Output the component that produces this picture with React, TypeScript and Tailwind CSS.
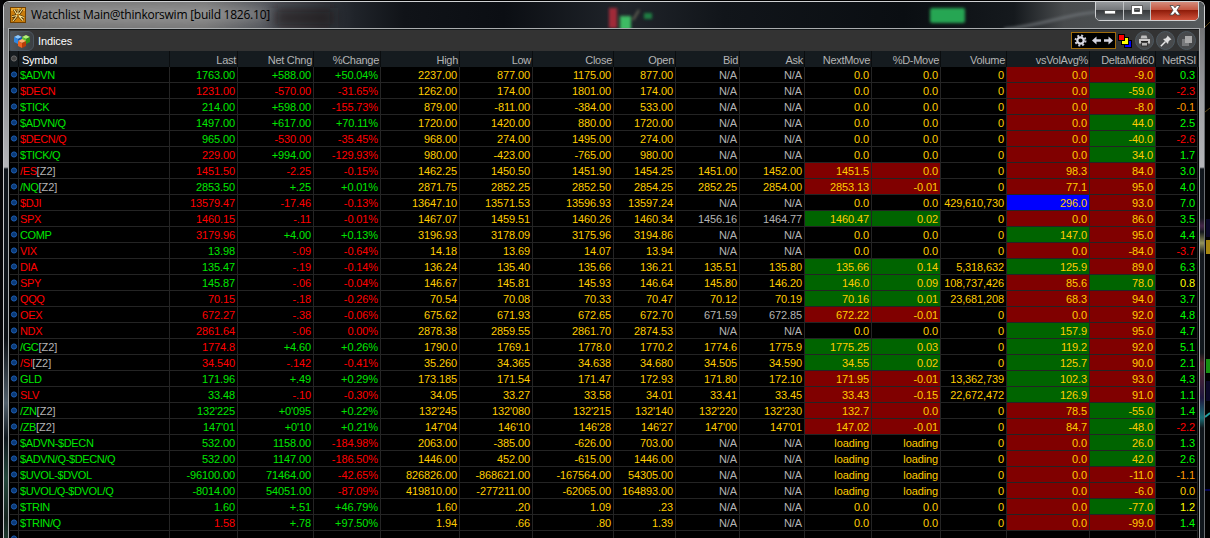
import React from "react";

const GRID =
  "grid grid-cols-[9px_151px_68px_76px_67px_79px_73px_81px_62px_64px_65px_67px_69px_66px_83px_66px_42px]";

const headers = [
  "Last", "Net Chng", "%Change", "High", "Low", "Close", "Open", "Bid", "Ask",
  "NextMove", "%D-Move", "Volume", "vsVolAvg%", "DeltaMid60", "NetRSI",
];

const textColor: Record<string, string> = {
  g: "text-[#00e600]",
  r: "text-[#ff0000]",
  y: "text-[#ffcc00]",
  w: "text-[#b4b4b4]",
  G: "text-[#00ff00]",
  Y: "text-[#ffff00]",
  o: "text-[#ff9900]",
};

const fill: Record<string, string> = {
  r: "bg-[#800000]",
  g: "bg-[#006400]",
  b: "bg-[#0000ff]",
  k: "",
};

// symbol | text colours of symbol, last, net, %chg, bid/ask, rsi | fills of next, d-move, vsvol, delta | values
const rows: string[] = [
  "$ADVN|ggggwG|kkrr|1763.00 +588.00 +50.04% 2237.00 877.00 1175.00 877.00 N/A N/A 0.0 0.0 0 0.0 -9.0 0.3",
  "$DECN|rrrrwr|kkrg|1231.00 -570.00 -31.65% 1262.00 174.00 1801.00 174.00 N/A N/A 0.0 0.0 0 0.0 -59.0 -2.3",
  "$TICK|gggrwo|kkrr|214.00 +598.00 -155.73% 879.00 -811.00 -384.00 533.00 N/A N/A 0.0 0.0 0 0.0 -8.0 -0.1",
  "$ADVN/Q|ggggwG|kkrg|1497.00 +617.00 +70.11% 1720.00 1420.00 880.00 1720.00 N/A N/A 0.0 0.0 0 0.0 44.0 2.5",
  "$DECN/Q|rgrrwr|kkrg|965.00 -530.00 -35.45% 968.00 274.00 1495.00 274.00 N/A N/A 0.0 0.0 0 0.0 -40.0 -2.6",
  "$TICK/Q|grgrwG|kkrg|229.00 +994.00 -129.93% 980.00 -423.00 -765.00 980.00 N/A N/A 0.0 0.0 0 0.0 34.0 1.7",
  "/ES[Z2]|rrrryG|rrrr|1451.50 -2.25 -0.15% 1462.25 1450.50 1451.90 1454.25 1451.00 1452.00 1451.5 0.0 0 98.3 84.0 3.0",
  "/NQ[Z2]|ggggyG|rrrr|2853.50 +.25 +0.01% 2871.75 2852.25 2852.50 2854.25 2852.25 2854.00 2853.13 -0.01 0 77.1 95.0 4.0",
  "$DJI|rrrrwG|kkbr|13579.47 -17.46 -0.13% 13647.10 13571.53 13596.93 13597.24 N/A N/A 0.0 0.0 429,610,730 296.0 93.0 7.0",
  "SPX|rrrrwG|ggrr|1460.15 -.11 -0.01% 1467.07 1459.51 1460.26 1460.34 1456.16 1464.77 1460.47 0.02 0 0.0 86.0 3.5",
  "COMP|grggwG|kkgr|3179.96 +4.00 +0.13% 3196.93 3178.09 3175.96 3194.86 N/A N/A 0.0 0.0 0 147.0 95.0 4.4",
  "VIX|rgrrwr|kkrr|13.98 -.09 -0.64% 14.18 13.69 14.07 13.94 N/A N/A 0.0 0.0 0 0.0 -84.0 -3.7",
  "DIA|rgrryG|gggr|135.47 -.19 -0.14% 136.24 135.40 135.66 136.21 135.51 135.80 135.66 0.14 5,318,632 125.9 89.0 6.3",
  "SPY|rgrryY|ggrg|145.87 -.06 -0.04% 146.67 145.81 145.93 146.64 145.80 146.20 146.0 0.09 108,737,426 85.6 78.0 0.8",
  "QQQ|rrrryG|ggrr|70.15 -.18 -0.26% 70.54 70.08 70.33 70.47 70.12 70.19 70.16 0.01 23,681,208 68.3 94.0 3.7",
  "OEX|rrrrwG|rrrr|672.27 -.38 -0.06% 675.62 671.93 672.65 672.70 671.59 672.85 672.22 -0.01 0 0.0 92.0 4.8",
  "NDX|rrrrwG|kkgr|2861.64 -.06 0.00% 2878.38 2859.55 2861.70 2874.53 N/A N/A 0.0 0.0 0 157.9 95.0 4.7",
  "/GC[Z2]|grggyG|gggr|1774.8 +4.60 +0.26% 1790.0 1769.1 1778.0 1770.2 1774.6 1775.9 1775.25 0.03 0 119.2 92.0 5.1",
  "/SI[Z2]|rrrryG|gggr|34.540 -.142 -0.41% 35.260 34.365 34.638 34.680 34.505 34.590 34.55 0.02 0 125.7 90.0 2.1",
  "GLD|ggggyG|rrgr|171.96 +.49 +0.29% 173.185 171.54 171.47 172.93 171.80 172.10 171.95 -0.01 13,362,739 102.3 93.0 4.3",
  "SLV|rgrryG|rrgr|33.48 -.10 -0.30% 34.05 33.27 33.58 34.01 33.41 33.45 33.43 -0.15 22,672,472 126.9 91.0 1.1",
  "/ZN[Z2]|ggggyG|rrrg|132'225 +0'095 +0.22% 132'245 132'080 132'215 132'140 132'220 132'230 132.7 0.0 0 78.5 -55.0 1.4",
  "/ZB[Z2]|ggggyr|rrrg|147'01 +0'10 +0.21% 147'04 146'10 146'28 146'27 147'00 147'01 147.02 -0.01 0 84.7 -48.0 -2.2",
  "$ADVN-$DECN|gggrwG|kkrg|532.00 1158.00 -184.98% 2063.00 -385.00 -626.00 703.00 N/A N/A loading loading 0 0.0 26.0 1.3",
  "$ADVN/Q-$DECN/Q|gggrwG|kkrg|532.00 1147.00 -186.50% 1446.00 452.00 -615.00 1446.00 N/A N/A loading loading 0 0.0 42.0 2.6",
  "$UVOL-$DVOL|gggrwo|kkrr|-96100.00 71464.00 -42.65% 826826.00 -868621.00 -167564.00 54305.00 N/A N/A loading loading 0 0.0 -11.0 -1.1",
  "$UVOL/Q-$DVOL/Q|gggrwy|kkrr|-8014.00 54051.00 -87.09% 419810.00 -277211.00 -62065.00 164893.00 N/A N/A loading loading 0 0.0 -6.0 0.0",
  "$TRIN|ggggwY|kkrg|1.60 +.51 +46.79% 1.60 .20 1.09 .23 N/A N/A 0.0 0.0 0 0.0 -77.0 1.2",
  "$TRIN/Q|grggwG|kkrr|1.58 +.78 +97.50% 1.94 .66 .80 1.39 N/A N/A 0.0 0.0 0 0.0 -99.0 1.4",
];

const LINE = "h-4 border-r border-b border-[#242424]";

function Dot({ gray }: { gray?: boolean }) {
  return (
    <svg width="8" height="15" viewBox="0 0 8 15" className="block">
      <circle cx="4" cy="7.5" r="2.6" fill={gray ? "#444" : "#0a3a78"} stroke={gray ? "#6a6a6a" : "#1d5cae"} strokeWidth="1" />
    </svg>
  );
}

function Row({ data }: { data: string }) {
  const [symbol, tc, fc, vals] = data.split("|");
  const values = vals.split(" ");
  const [base, suffix] = symbol.split("[");
  const colorOf = (i: number) => {
    if (i < 3) return tc[i + 1];
    if (i === 7 || i === 8) return tc[4];
    if (i === 14) return tc[5];
    return "y";
  };
  const fillOf = (i: number) => {
    if (i === 9 || i === 10) return fc[i - 9];
    if (i === 12 || i === 13) return fc[i - 10];
    return "k";
  };
  return (
    <div className={`${GRID} h-4`}>
      <div className={LINE}><Dot /></div>
      <div className={`${LINE} pl-px tracking-[-0.38px] ${textColor[tc[0]]}`}>
        {base}
        {suffix && <span className="tracking-normal text-[#b4b4b4]">[{suffix}</span>}
      </div>
      {values.map((v, i) => (
        <div key={i} className={`${LINE} pr-[2px] text-right ${textColor[colorOf(i)]} ${fill[fillOf(i)]}`}>{v}</div>
      ))}
    </div>
  );
}

function AppIcon() {
  return (
    <svg width="16" height="16" viewBox="0 0 16 16">
      <rect x=".5" y=".5" width="15" height="15" fill="#c97d0c" stroke="#704000" />
      <path d="M1 1h14v3H1z" fill="#eda52a" />
      <path d="M4 2.500l3 5M8 2v5M12.500 2L9 7M2 9.500l5-1M9 8.500l5 2M7 9l-4 5M9 9l4 4.500" stroke="#3b2200" strokeWidth="2.400" />
      <path d="M4 2.500l3 5M8.200 1.500l-.4 5.500M12.500 2L9 7M2 9.500l5-1M9 8.500l5 2M7 9l-4 5M9 9l4 4.500" stroke="#ffe48a" strokeWidth="1.200" />
    </svg>
  );
}

function Cube({ x, y, top, left, right }: { x: number; y: number; top: string; left: string; right: string }) {
  return (
    <g transform={`translate(${x} ${y})`}>
      <path d="M0 2l4-2 4 2-4 2z" fill={top} />
      <path d="M0 2l4 2v5L0 7z" fill={left} />
      <path d="M8 2L4 4v5l4-2z" fill={right} />
    </g>
  );
}

function TitleBar() {
  return (
    <div className="relative flex h-[26px] shrink-0 items-center overflow-hidden bg-[linear-gradient(90deg,#777_0px,#777_200px,#50535a_270px,#20242a_350px,#101318_400px,#0b0e13_500px,#20242a_620px,#11151a_720px,#0a0e12_900px,#15191d_1010px,#484b4d_1060px,#555a5c_1195px)]">
      <svg className="absolute inset-0" width="1200" height="26">
        <defs>
          <filter id="soft" x="-50%" y="-50%" width="200%" height="200%"><feGaussianBlur stdDeviation="1.6" /></filter>
          <filter id="wide" x="-50%" y="-80%" width="200%" height="260%"><feGaussianBlur stdDeviation="6" /></filter>
        </defs>
        <ellipse cx="140" cy="12" rx="130" ry="8" fill="#a4a4a4" opacity=".65" filter="url(#wide)" />
        <path d="M270 6h60v20h-60z" fill="#1b1417" opacity=".6" filter="url(#wide)" />
        <g filter="url(#soft)">
          <rect x="605" y="6" width="8" height="20" fill="#a12c37" />
          <rect x="616" y="14" width="11" height="14" fill="#3cba63" />
          <rect x="640" y="11" width="8" height="6" fill="#1f7f43" />
          <path d="M629 18l6-10" stroke="#76745f" strokeWidth="1.5" />
          <rect x="926" y="6" width="35" height="15" rx="2" fill="#26a653" />
          <path d="M1000 27C1050 22 1060 10 1120 8" stroke="#71767a" strokeWidth="2" fill="none" />
        </g>
      </svg>
      <div className="relative ml-[6px] flex items-center gap-[5px]">
        <AppIcon />
        <span className="whitespace-nowrap font-['Open_Sans',sans-serif] text-[12px] leading-[16px] tracking-[-0.24px] text-black">
          Watchlist Main@thinkorswim [build 1826.10]
        </span>
      </div>
      <div className="absolute right-[5px] top-[-3px] flex h-[22px] w-[104px] overflow-hidden rounded-b-[5px] border border-[#d0d2d4]">
        <div className="flex w-[28px] items-end justify-center border-r border-[#c0c2c4] bg-[linear-gradient(#a0a3a6,#74777a_50%,#36393c_52%,#606468)] pb-[5px]">
          <svg width="12" height="6"><rect x=".5" y="1.5" width="11" height="3.5" fill="#fff" stroke="#444" strokeWidth=".8" /></svg>
        </div>
        <div className="flex w-[27px] items-end justify-center border-r border-[#c0c2c4] bg-[linear-gradient(#a0a3a6,#74777a_50%,#36393c_52%,#606468)] pb-[5px]">
          <svg width="12" height="10"><path fillRule="evenodd" d="M.5.5h11v9H.5zM3.5 3.5v3h5v-3z" fill="#fff" stroke="#444" strokeWidth=".8" /></svg>
        </div>
        <div className="flex flex-1 items-end justify-center bg-[linear-gradient(#d89a8b,#c4553f_50%,#8f1c0a_52%,#d0513a)] pb-[4px]">
          <svg width="14" height="11"><path d="M2 .5h3.2L7 2.8 8.800.5H12L9 5.200l3.200 4.800H8.900L7 7.600 5.100 10H1.800L5 5.200z" fill="#fff" stroke="#444" strokeWidth=".8" /></svg>
        </div>
      </div>
    </div>
  );
}

function RoundButton({ children }: { children: React.ReactNode }) {
  return (
    <div className="flex size-[19px] items-center justify-center rounded-full border border-[#4d5860] bg-[#484a4c]">{children}</div>
  );
}

function Toolbar() {
  return (
    <div className="flex h-[21px] shrink-0 items-center bg-[#333333]">
      <div className="ml-px flex h-[20px] w-[24px] items-center justify-center rounded-r-[6px] border border-[#4c5660] bg-[linear-gradient(90deg,#53575c,#3b3f43)]">
        <svg width="18" height="14" viewBox="0 0 18 14">
          <Cube x={1} y={1} top="#8cc8ff" left="#2f86e0" right="#1558b0" />
          <Cube x={9} y={1} top="#b5f078" left="#5cc32e" right="#2f8f18" />
          <Cube x={5} y={5} top="#ffb070" left="#ee6420" right="#b83c08" />
        </svg>
      </div>
      <span className="ml-[4px] flex-1 text-[11px] leading-[14px] tracking-[-0.1px] text-white">Indices</span>
      <div className="flex h-[17px] w-[45px] items-center justify-between border border-[#a06c0c] bg-black px-[2px]">
        <svg width="13" height="13" viewBox="0 0 13 13">
          <circle cx="6.500" cy="6.500" r="5" fill="none" stroke="#c8c8d4" strokeWidth="2" strokeDasharray="2 1.927" />
          <circle cx="6.500" cy="6.500" r="3.200" fill="none" stroke="#dcdce6" strokeWidth="2.200" />
        </svg>
        <svg className="ml-px" width="9" height="9" viewBox="0 0 9 9"><path d="M0 4.500L4.500.5v2.700H9v2.600H4.500v2.700z" fill="#d4d4e0" /></svg>
        <svg width="9" height="9" viewBox="0 0 9 9"><path d="M9 4.500L4.500.5v2.700H0v2.600h4.500v2.700z" fill="#d4d4e0" /></svg>
      </div>
      <svg className="ml-[2px]" width="14" height="14" viewBox="0 0 14 14" shapeRendering="crispEdges">
        <path d="M6 6h7v7H6z" fill="#0000ff" stroke="#000" />
        <path d="M3 3h7v7H3z" fill="#ffff00" stroke="#000" />
        <path d="M0 0h7v7H0z" fill="#000" />
        <path d="M1 1h5v5H1z" fill="#ff0000" />
      </svg>
      <div className="ml-[3px] mr-[3px] flex gap-[2px]">
        <RoundButton>
          <svg width="13" height="12" viewBox="0 0 13 12">
            <path d="M3.500.5h5l1 3h-7z" fill="#bfbfbf" />
            <path d="M1 4h11v4.500H1z" fill="#c8c8c8" /><path d="M3 6.500h7" stroke="#222" />
            <path d="M3.500 7.500h6v3.500h-6z" fill="#b5b5b5" stroke="#222" strokeWidth=".8" />
          </svg>
        </RoundButton>
        <RoundButton>
          <svg width="12" height="12" viewBox="0 0 12 12">
            <path d="M7.500.5L11.500 4.500 10 5 8.500 6.500 8 9 3 4l2.500-.5L7 2z" fill="#e0e0e0" />
            <path d="M5.500 6.500L.8 11.200" stroke="#e8e8e8" strokeWidth="1.500" />
          </svg>
        </RoundButton>
        <RoundButton>
          <svg width="12" height="12" viewBox="0 0 12 12">
            <path d="M1 4h7v7H1z" fill="#77797b" /><path d="M4 1h7v7H4z" fill="#a9a9a9" />
          </svg>
        </RoundButton>
      </div>
    </div>
  );
}

export default function App() {
  return (
    <div className="flex h-[538px] w-[1210px] overflow-hidden bg-black font-['Liberation_Sans',Arial,sans-serif]">
      <div className="w-[3px] shrink-0 bg-[#050507]" />
      <div className="flex w-[1202px] shrink-0 flex-col pt-px">
        <div className="flex h-[27px] shrink-0 flex-col overflow-hidden rounded-t-[6px] border-x border-t border-[#cfd1d3]">
          <TitleBar />
        </div>
        <div className="flex min-h-0 flex-1">
          <div className="w-[5px] shrink-0 border-l border-[#c5c7ca] bg-[linear-gradient(#737476_0px,#8d8e92_60px,#b5b6ba_139px,#10161c_141px,#10161c_220px,#0c1014_310px,#52606c_375px,#10181e_410px,#24483c_450px,#16241f_490px,#27503f_530px,#10181e)]" />
          <div className="flex w-[1192px] shrink-0 flex-col overflow-hidden border-x border-t border-[#a9acae] bg-black">
            <div className="h-px shrink-0 bg-[#15191b]" />
            <Toolbar />
            <div className="ml-px text-[11px] leading-[16px] tracking-[-0.12px]">
              <div className={`${GRID} h-4 bg-[#151b1f] tracking-[-0.28px] text-[#b4b4b4]`}>
                <div className="h-4 border-r border-[#0a0d0f]"><Dot gray /></div>
                <div className="h-4 border-r border-[#0a0d0f] pl-[3px] leading-[18px] text-white">Symbol</div>
                {headers.map((h) => (
                  <div key={h} className="h-4 whitespace-nowrap border-r border-[#0a0d0f] pr-px text-right leading-[18px]">{h}</div>
                ))}
              </div>
              {rows.map((r) => <Row key={r} data={r} />)}
              <div className={`${GRID} h-4`}>
                <div className={LINE}><Dot /></div>
                {Array.from({ length: 16 }, (_, i) => <div key={i} className={LINE} />)}
              </div>
            </div>
          </div>
          <div className="flex-1 border-r border-[#6a6e72] bg-[linear-gradient(#737476_0px,#9d9ea2_70px,#b5b6ba_139px,#10161c_141px,#14181e_190px,#46264a_198px,#14181e_204px,#94945c_215px,#14181e_226px,#10161c_325px,#5a2830_335px,#201840_370px,#187078_390px,#10161c_400px)]" />
        </div>
      </div>
      <svg width="5" height="538" className="shrink-0">
        <path d="M0 27l5-5M0 112l5-4" stroke="#5a4618" />
        <rect x="1" y="240" width="4" height="14" fill="#a58510" />
        <rect x="1" y="219" width="4" height="18" fill="#0b0828" />
        <rect x="1" y="359" width="4" height="14" fill="#169010" />
        <rect x="1" y="381" width="4" height="20" fill="#0b0828" />
        <path d="M0 417l5-4" stroke="#20a0a0" strokeWidth="2" />
        <path d="M0 490h5" stroke="#0808a0" />
      </svg>
    </div>
  );
}
